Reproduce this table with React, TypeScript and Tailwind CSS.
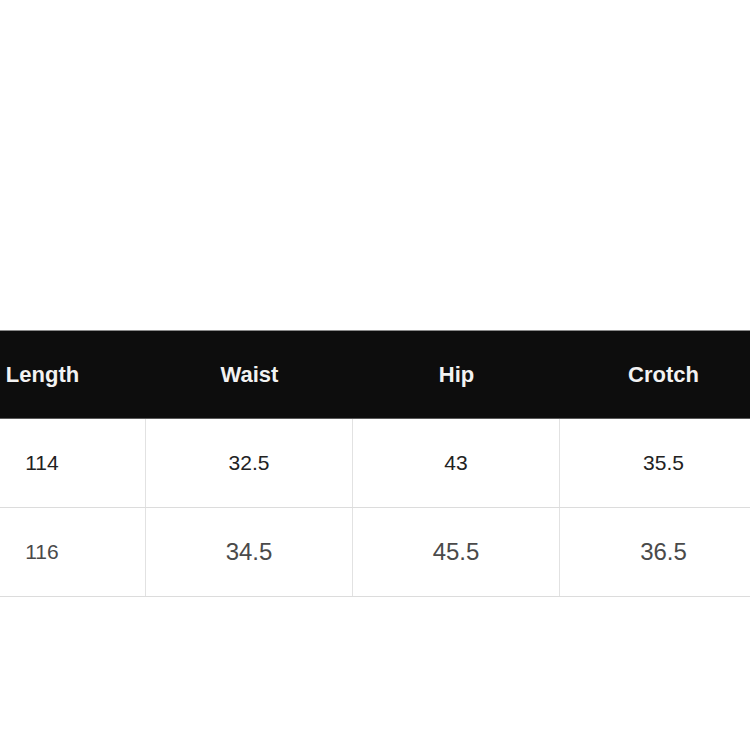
const headers = ["Length", "Waist", "Hip", "Crotch"];

const rows = [
  { values: ["114", "32.5", "43", "35.5"], light: false },
  { values: ["116", "34.5", "45.5", "36.5"], light: true },
];

export default function App() {
  return (
    <div className="w-[750px] h-[750px] overflow-hidden bg-white pt-[330px] font-['Liberation_Sans',Arial,sans-serif]">
      <div className="-ml-[61px] w-[828px]">
        {/* header */}
        <div className="grid grid-cols-4 h-[89px] bg-[#0d0d0d] border-t border-t-[#8a8a8a] border-b border-b-[#5a5a5a]">
          {headers.map((h) => (
            <div
              key={h}
              className="flex items-center justify-center text-[22px] font-bold text-[#f2f2f2]"
            >
              {h}
            </div>
          ))}
        </div>

        {/* body */}
        {rows.map((row, i) => (
          <div
            key={i}
            className="grid grid-cols-4 h-[89px] border-b border-[#dcdcdc]"
          >
            {row.values.map((v, j) => (
              <div
                key={j}
                className={
                  "flex items-center justify-center " +
                  (j < 3 ? "border-r border-[#e2e2e2] " : "") +
                  (row.light
                    ? j === 0
                      ? "text-[21px] text-[#4a4a4a]"
                      : "text-[24px] text-[#4a4a4a]"
                    : "text-[21px] text-[#222222]")
                }
              >
                {v}
              </div>
            ))}
          </div>
        ))}
      </div>
    </div>
  );
}
